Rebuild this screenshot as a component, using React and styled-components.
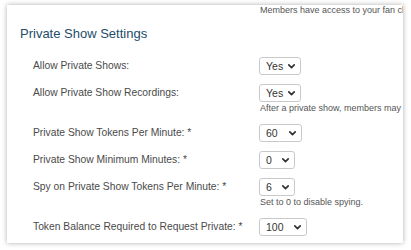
import styled, { createGlobalStyle } from 'styled-components';

const GlobalStyle = createGlobalStyle`
  html, body {
    margin: 0;
    padding: 0;
    background: #ffffff;
  }
  body {
    font-family: 'Liberation Sans', Arial, sans-serif;
  }
`;

const rows = [
  { label: 'Allow Private Shows:', value: 'Yes', width: 42 },
  { label: 'Allow Private Show Recordings:', value: 'Yes', width: 42, help: 'After a private show, members may have access to the recording' },
  { label: 'Private Show Tokens Per Minute: *', value: '60', width: 43 },
  { label: 'Private Show Minimum Minutes: *', value: '0', width: 36 },
  { label: 'Spy on Private Show Tokens Per Minute: *', value: '6', width: 36, help: 'Set to 0 to disable spying.' },
  { label: 'Token Balance Required to Request Private: *', value: '100', width: 48 },
];

const Chevron = () => (
  <svg width="7" height="5" viewBox="0 0 7 5" aria-hidden="true">
    <polyline points="0.8,0.9 3.5,3.6 6.2,0.9" fill="none" stroke="#333" strokeWidth="1.7" strokeLinecap="round" strokeLinejoin="round" />
  </svg>
);

const App = () => (
  <>
    <GlobalStyle />
    <Page>
      <Card>
        <Note>Members have access to your fan club content for the length of their membership</Note>
        <Heading>Private Show Settings</Heading>
        <Form>
          {rows.map(({ label, value, width, help }) => (
            <Row key={label}>
              <Label>{label}</Label>
              <Control>
                <Select $width={width}>
                  <span>{value}</span>
                  <Chevron />
                </Select>
                {help && <Help>{help}</Help>}
              </Control>
            </Row>
          ))}
        </Form>
      </Card>
    </Page>
  </>
);

const Page = styled.div`
  width: 411px;
  height: 250px;
  box-sizing: border-box;
  padding: 5px 8px 7px 7px;
  overflow: hidden;
`;

const Card = styled.div`
  height: 100%;
  background: #fff;
  box-shadow: 0 0 5px rgba(0, 0, 0, 0.32);
  overflow: hidden;
`;

const Note = styled.div`
  margin: -1px 0 0 253px;
  font-size: 9px;
  line-height: 12px;
  color: #555;
  white-space: nowrap;
`;

const Heading = styled.h2`
  margin: 10px 0 0 13px;
  font-size: 13px;
  line-height: 16px;
  font-weight: 500;
  color: #1d4d6a;
`;

const Form = styled.div`
  display: flex;
  flex-direction: column;
  gap: 9px;
  margin-top: 15px;
  padding-left: 26px;
`;

const Row = styled.div`
  display: grid;
  grid-template-columns: 226px 1fr;
  align-items: start;
`;

const Label = styled.div`
  font-size: 10.3px;
  line-height: 18px;
  color: #4a4a4a;
  white-space: nowrap;
`;

const Control = styled.div`
  display: flex;
  flex-direction: column;
  align-items: flex-start;
`;

const Select = styled.div`
  display: flex;
  align-items: center;
  justify-content: space-between;
  box-sizing: border-box;
  width: ${props => props.$width}px;
  height: 18px;
  padding: 0 5px 0 6px;
  border: 1px solid #c9c9c9;
  border-radius: 3px;
  background: #fff;
  font-size: 10.5px;
  color: #333;
`;

const Help = styled.div`
  margin-left: 1px;
  font-size: 9px;
  line-height: 13px;
  color: #555;
  white-space: nowrap;
`;

export default App;
